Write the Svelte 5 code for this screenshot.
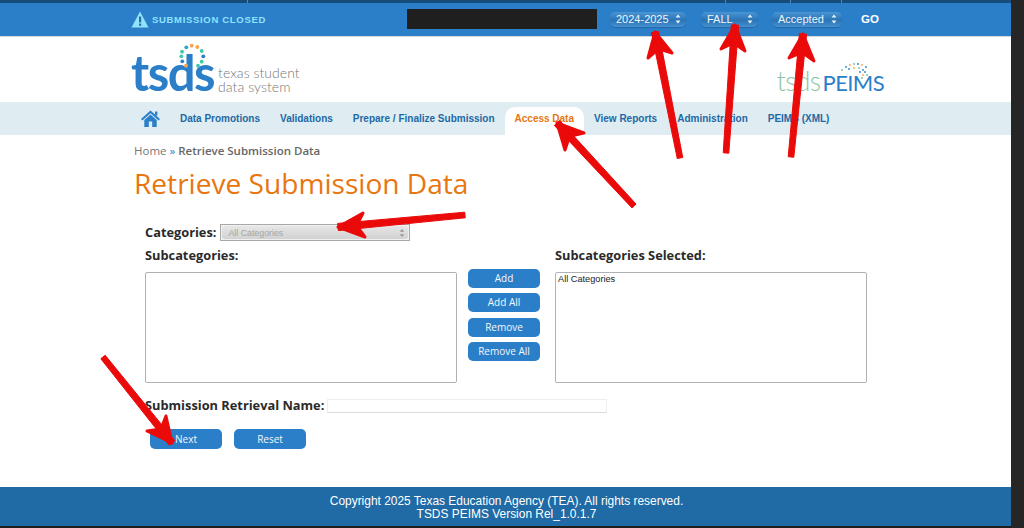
<script>
  const navItems = ['Data Promotions', 'Validations', 'Prepare / Finalize Submission', 'Access Data', 'View Reports', 'Administration', 'PEIMS (XML)'];
  const filters = [
    { label: '2024-2025', cls: 'year' },
    { label: 'FALL', cls: 'term' },
    { label: 'Accepted', cls: 'status' }
  ];
  const moveButtons = ['Add', 'Add All', 'Remove', 'Remove All'];
  const ringDots = [
    [191.7, 45.7, '#f9a350'], [197.3, 47, '#f9a350'], [201.7, 51, '#3dc9a5'], [203.3, 56.3, '#2b7fc9'],
    [201.7, 61.7, '#3dc9a5'], [198, 65.7, '#3dc9a5'], [186, 65.7, '#f9a350'], [182.3, 61.3, '#2b7fc9'],
    [181.3, 56.3, '#3dc9a5'], [182, 51.7, '#3dc9a5'], [186.3, 47.3, '#2ba8c9']
  ];
  const peimsDots = [
    [842, 70, '#6cc0a0'], [846, 67, '#2b7fc9'], [850, 65, '#f9a350'], [854, 64, '#6cc0a0'], [858, 64, '#2b7fc9'],
    [862, 65, '#f9a350'], [866, 67, '#2b7fc9'], [849, 69, '#2b7fc9'], [854, 68, '#f9a350'], [859, 68, '#6cc0a0'],
    [863, 70, '#2b7fc9'], [860, 72, '#2b7fc9'], [865, 72, '#2b7fc9'], [863, 75, '#f9a350'], [867, 75, '#6cc0a0'], [862, 78, '#6cc0a0']
  ];
  // tail, tip, wing, wing
  const arrows = [
    [680, 158, 655, 32, 648, 58, 672, 53],
    [726, 153, 735, 25, 721, 49, 745, 51],
    [791, 157, 803, 34, 789, 58, 814, 61],
    [634, 206, 557, 123, 584, 133, 565, 150],
    [465, 215, 338, 227, 363, 213, 365, 237],
    [103, 357, 172, 443, 166, 416, 147, 431]
  ];

  // filled head: tip, wing, notch on the shaft, wing
  const headPath = (a) => {
    const nx = a[2] + (a[4] + a[6] - 2 * a[2]) * 0.36;
    const ny = a[3] + (a[5] + a[7] - 2 * a[3]) * 0.36;
    return `M${a[2]} ${a[3]} L${a[4]} ${a[5]} L${nx} ${ny} L${a[6]} ${a[7]} Z`;
  };
  // shaft that narrows a little toward the tail
  const shaftPath = (a) => {
    const dx = a[0] - a[2];
    const dy = a[1] - a[3];
    const len = Math.hypot(dx, dy);
    const px = -dy / len;
    const py = dx / len;
    const hw = 3.6;
    const tw = 2.8;
    return `M${a[2] + px * hw} ${a[3] + py * hw} L${a[0] + px * tw} ${a[1] + py * tw} L${a[0] - px * tw} ${a[1] - py * tw} L${a[2] - px * hw} ${a[3] - py * hw} Z`;
  };
</script>

<div class="page">
  <div class="main">
    <div class="topstrip">
      <i style="left: 247px"></i><i style="left: 725px"></i><i style="left: 790px"></i><i style="left: 841px"></i>
    </div>
    <div class="statusbar">
      <div class="closed">
        <svg width="18" height="17" viewBox="0 0 18 17">
          <path d="M9 0.5 L17.5 16.5 H0.5 Z" fill="#8fe3fb" />
          <rect x="8" y="5.5" width="2.2" height="6" fill="#2b6ea6" />
          <rect x="8" y="12.6" width="2.2" height="2.2" fill="#2b6ea6" />
        </svg>
        <span>SUBMISSION CLOSED</span>
      </div>
      <div class="redacted"></div>
      {#each filters as f}
        <div class="pill {f.cls}">
          <span>{f.label}</span>
          <svg width="6" height="10" viewBox="0 0 6 10"><path d="M3 0.5 L5.5 3.5 H0.5 Z M3 9.5 L5.5 6.5 H0.5 Z" fill="#e8f1f8" /></svg>
        </div>
      {/each}
      <span class="go">GO</span>
    </div>

    <div class="brand">
      <div class="tsds">
        <span class="mark">tsds</span>
        <span class="tagline">texas student<br />data system</span>
      </div>
      <div class="peims"><span class="small">tsds</span><span class="big">PEIMS</span></div>
    </div>

    <nav class="nav">
      <svg class="home" width="19" height="17" viewBox="0 0 19 17">
        <path d="M9.5 0.5 L19 9 L17.6 10.4 L9.5 3.3 L1.4 10.4 L0 9 Z" fill="#2b7fc9" />
        <path d="M3.3 10 L9.5 4.6 L15.7 10 V17 H11.2 V11.6 H7.8 V17 H3.3 Z" fill="#2b7fc9" />
        <rect x="14" y="1.5" width="2.4" height="4" fill="#2b7fc9" />
      </svg>
      {#each navItems as item}
        <span class="navitem" class:active={item === 'Access Data'}>{item}</span>
      {/each}
    </nav>

    <div class="content">
      <div class="crumbs">Home <em>»</em> <b>Retrieve Submission Data</b></div>
      <h1>Retrieve Submission Data</h1>

      <div class="form">
        <div class="catrow">
          <span class="lbl">Categories:</span>
          <div class="catselect">
            <div class="catinner">
              <span>All Categories</span>
              <svg width="6" height="10" viewBox="0 0 6 10"><path d="M3 1 L5.3 3.8 H0.7 Z M3 9 L5.3 6.2 H0.7 Z" fill="#999" /></svg>
            </div>
          </div>
        </div>

        <div class="pickers">
          <div class="col">
            <span class="lbl">Subcategories:</span>
            <div class="listbox left"></div>
          </div>
          <div class="moves">
            {#each moveButtons as b}
              <button class="btn">{b}</button>
            {/each}
          </div>
          <div class="col">
            <span class="lbl">Subcategories Selected:</span>
            <div class="listbox right">All Categories</div>
          </div>
        </div>

        <div class="namerow">
          <span class="lbl">Submission Retrieval Name:</span>
          <div class="nameinput"></div>
        </div>

        <div class="actions">
          <button class="btn tall">Next</button>
          <button class="btn tall">Reset</button>
        </div>
      </div>
    </div>

    <footer class="footer">
      <div>Copyright 2025 Texas Education Agency (TEA). All rights reserved.</div>
      <div>TSDS PEIMS Version Rel_1.0.1.7</div>
    </footer>
    <div class="bottomstrip"></div>
  </div>
  <div class="rightstrip"></div>

  <svg class="overlay" width="1024" height="528" viewBox="0 0 1024 528">
    {#each ringDots as d}
      <circle cx={d[0]} cy={d[1]} r="1.9" fill={d[2]} />
    {/each}
    {#each peimsDots as d}
      <circle cx={d[0]} cy={d[1]} r="0.9" fill={d[2]} />
    {/each}
    {#each arrows as a}
      <path d={shaftPath(a)} fill="#ea0a0a" stroke="#ea0a0a" stroke-width="1" stroke-linejoin="round" />
      <path d={headPath(a)} fill="#ea0a0a" stroke="#ea0a0a" stroke-width="3" stroke-linejoin="round" />
    {/each}
  </svg>
</div>

<style>
  :global(body) {
    margin: 0;
    background: #fff;
  }
  .page {
    position: relative;
    display: flex;
    width: 1024px;
    height: 528px;
    overflow: hidden;
    font-family: 'Liberation Sans', Arial, sans-serif;
  }
  .main {
    display: flex;
    flex-direction: column;
    width: 1011px;
    height: 528px;
    background: #fff;
  }
  .rightstrip {
    width: 13px;
    background: #262626;
  }
  .topstrip {
    position: relative;
    height: 3px;
    background: #174d7c;
  }
  .topstrip i {
    position: absolute;
    top: 0;
    width: 1px;
    height: 3px;
    background: #5b84a8;
  }
  .statusbar {
    display: flex;
    align-items: center;
    height: 33px;
    padding-left: 131px;
    background: #2b7fc9;
    border-bottom: 1px solid #d5d8da;
    box-sizing: content-box;
  }
  .closed {
    display: flex;
    align-items: center;
    gap: 3px;
    width: 276px;
    font-size: 9.5px;
    font-weight: bold;
    letter-spacing: 0.68px;
    color: #8fe3fb;
  }
  .redacted {
    width: 190px;
    height: 20px;
    background: #1f1f1f;
    margin-right: 13px;
    margin-top: -1px;
  }
  .pill {
    display: flex;
    align-items: center;
    justify-content: space-between;
    height: 15px;
    margin-top: -1px;
    padding: 0 5px 0 6px;
    box-sizing: border-box;
    border-radius: 5px;
    font-size: 11px;
    color: #eef5fb;
    background: linear-gradient(#4a95d4, #2a74b6 55%, #4690d0);
    box-shadow: 0 1px 1px #2568a5;
  }
  .pill.year { width: 76px; margin-right: 15px; }
  .pill.term { width: 57px; margin-right: 14px; }
  .pill.status { width: 70px; margin-right: 19px; }
  .go {
    font-size: 11.5px;
    font-weight: bold;
    color: #fff;
    margin-top: -1px;
  }
  .brand {
    position: relative;
    height: 65px;
    flex: none;
    display: flex;
    justify-content: space-between;
    padding: 0 127px 0 131px;
  }
  .tsds {
    display: flex;
    align-items: flex-end;
    padding-bottom: 6px;
  }
  .mark {
    font-family: Lato, sans-serif;
    font-size: 49px;
    font-weight: 700;
    line-height: 47px;
    letter-spacing: -1.5px;
    color: #2b7fc9;
  }
  .tagline {
    margin: 0 0 2px 4px;
    font-family: Lato, sans-serif;
    font-size: 14px;
    font-weight: 300;
    line-height: 14px;
    letter-spacing: 0.05px;
    color: #777;
  }
  .peims {
    display: flex;
    align-items: baseline;
    align-self: flex-end;
    padding-bottom: 7px;
    font-family: Lato, sans-serif;
    line-height: 24px;
  }
  .peims .small {
    font-size: 26.5px;
    color: #8ec6a4;
    font-weight: 300;
    letter-spacing: -0.6px;
  }
  .peims .big {
    margin-left: 2px;
    font-size: 22px;
    color: #2b7fc9;
    font-weight: 400;
    letter-spacing: -0.6px;
  }
  .nav {
    display: flex;
    align-items: stretch;
    height: 33px;
    flex: none;
    padding-left: 141px;
    background: #dfedf2;
  }
  .home {
    align-self: center;
    margin-right: 10px;
    margin-top: -1px;
  }
  .navitem {
    display: flex;
    align-items: center;
    padding: 0 10px;
    font-size: 10px;
    font-weight: bold;
    color: #2268a5;
    white-space: nowrap;
  }
  .navitem.active {
    margin-top: 5px;
    padding-bottom: 5px;
    background: #fff;
    border-radius: 10px 10px 0 0;
    color: #e8760f;
  }
  .content {
    flex: 1;
    padding: 9px 0 0 134px;
    font-family: 'Open Sans', sans-serif;
  }
  .crumbs {
    font-size: 11.5px;
    line-height: 14px;
    color: #777;
  }
  .crumbs em {
    font-style: normal;
    color: #2b7fc9;
  }
  .crumbs b {
    color: #666;
    font-weight: 600;
  }
  h1 {
    margin: 8px 0 0;
    font-size: 28.1px;
    line-height: 34px;
    font-weight: 400;
    color: #e8760f;
  }
  .form {
    padding: 24px 0 0 11px;
  }
  .lbl {
    font-size: 12.8px;
    line-height: 17px;
    font-weight: 700;
    color: #2a2a2a;
    white-space: nowrap;
  }
  .catrow {
    display: flex;
    align-items: center;
    gap: 4px;
    height: 17px;
  }
  .catselect {
    width: 190px;
    height: 17px;
    padding: 1px;
    box-sizing: border-box;
    border: 1px solid #a8a8a8;
    background: #f0f0f0;
  }
  .catinner {
    display: flex;
    align-items: center;
    justify-content: space-between;
    height: 13px;
    padding: 0 3px 0 6px;
    border-radius: 3px;
    background: linear-gradient(#e6e6e6, #d2d2d2);
    font-family: 'Liberation Sans', Arial, sans-serif;
    font-size: 8.8px;
    color: #a5a5a5;
  }
  .pickers {
    display: flex;
    margin-top: 6px;
  }
  .col {
    display: flex;
    flex-direction: column;
    gap: 8px;
  }
  .listbox {
    height: 111px;
    box-sizing: border-box;
    background: #fff;
    border: 1px solid #aeb2b5;
    border-radius: 2px;
  }
  .listbox.left {
    width: 312px;
  }
  .listbox.right {
    width: 312px;
    padding: 1px 2px;
    font-family: 'Liberation Sans', Arial, sans-serif;
    font-size: 9.2px;
    line-height: 10px;
    color: #222;
  }
  .moves {
    display: flex;
    flex-direction: column;
    gap: 5.4px;
    padding: 22px 15px 0 11px;
  }
  .btn {
    width: 72px;
    height: 19px;
    padding: 0;
    border: 0;
    border-radius: 5px;
    background: #2b7fc9;
    color: #f2f7fb;
    font-family: 'Open Sans', sans-serif;
    font-size: 10px;
    line-height: 19px;
  }
  .btn.tall {
    height: 20px;
  }
  .namerow {
    display: flex;
    align-items: center;
    gap: 3px;
    margin-top: 14px;
    height: 17px;
  }
  .nameinput {
    width: 280px;
    height: 14px;
    box-sizing: border-box;
    background: #fff;
    border: 1px solid #eeeeee;
    border-bottom-color: #dcdcdc;
  }
  .actions {
    display: flex;
    gap: 12px;
    margin: 15px 0 0 5px;
  }
  .footer {
    height: 39px;
    flex: none;
    box-sizing: border-box;
    padding: 8px 0 0 2px;
    background: #206aa5;
    text-align: center;
    font-size: 11.95px;
    line-height: 13px;
    color: #fff;
  }
  .bottomstrip {
    height: 2px;
    flex: none;
    background: #1d1d1d;
  }
  .overlay {
    position: absolute;
    left: 0;
    top: 0;
    pointer-events: none;
  }
</style>
